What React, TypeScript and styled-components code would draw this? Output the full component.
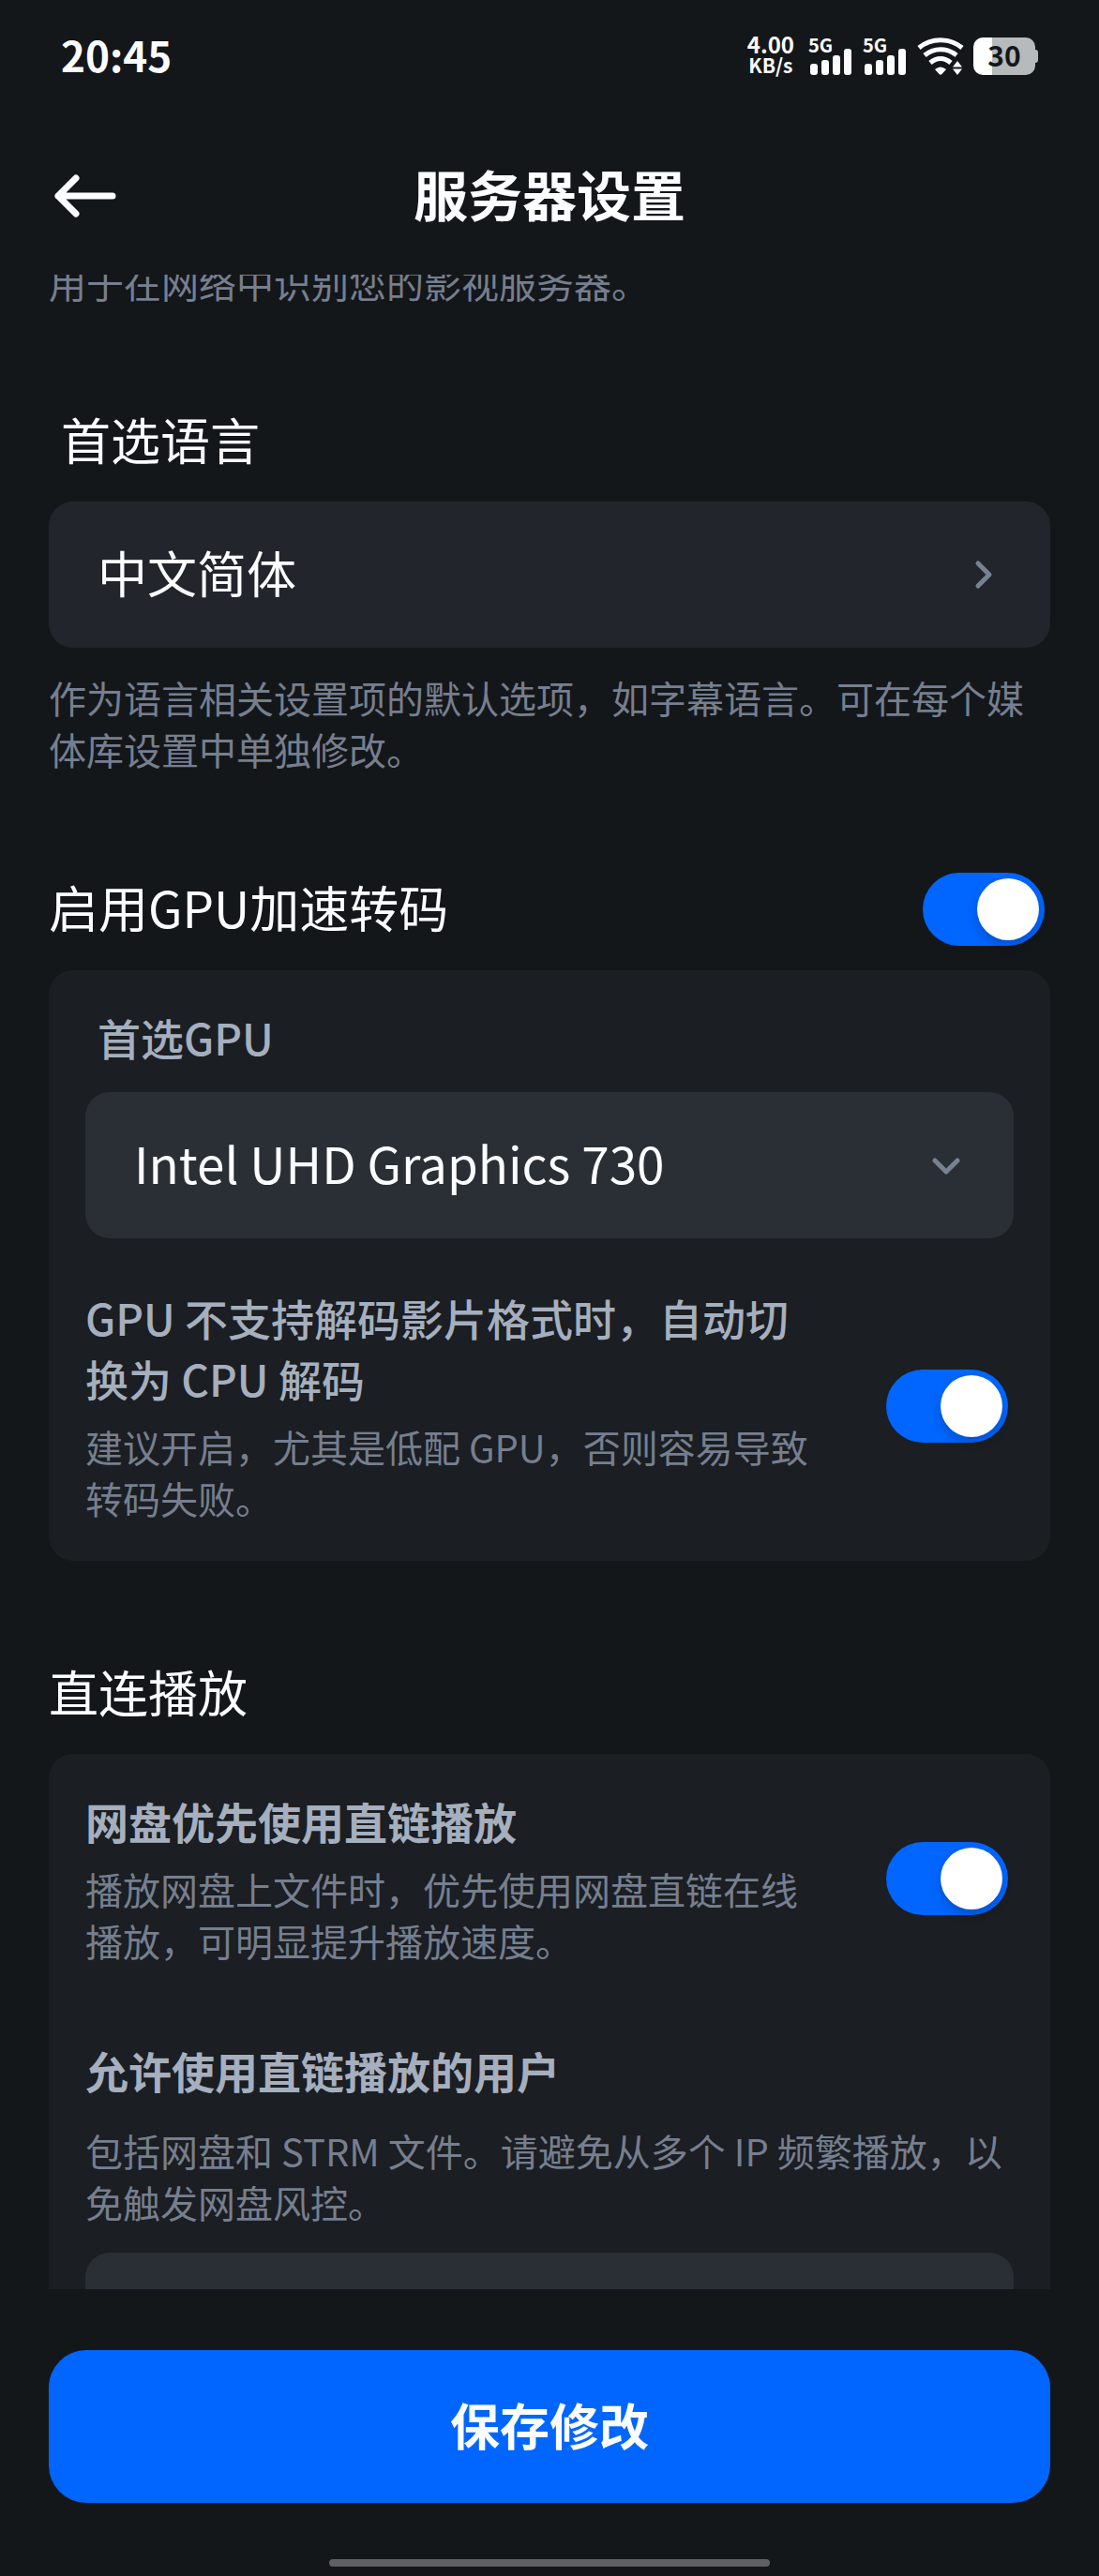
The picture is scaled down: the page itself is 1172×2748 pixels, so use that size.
import React, { useId, useLayoutEffect, useRef } from "react";
import styled, { createGlobalStyle, css } from "styled-components";

const color = {
  page: "#14171a",
  card: "#1b1e22",
  field: "#22252c",
  fieldRaised: "#2a2f36",
  text: "#fbfdfe",
  label: "#a5afbe",
  hint: "#767f8f",
  accent: "#0066ff",
};

const GlobalStyle = createGlobalStyle`
  *, *::before, *::after { box-sizing: border-box; }
  body { margin: 0; background: ${color.page}; }
  h1, h2, h3, p { margin: 0; font-weight: 400; }
  button, select, input { font: inherit; color: inherit; margin: 0; }
  body, button, select {
    font-family: "Noto Sans CJK SC", "Noto Sans", sans-serif;
  }
`;

const Page = styled.div`
  display: flex;
  flex-direction: column;
  height: 100vh;
  color: ${color.text};
`;

/* ---------- status bar ---------- */

const StatusBar = styled.div`
  display: flex;
  flex: none;
  align-items: center;
  justify-content: space-between;
  height: 120px;
  padding: 0 65px;
`;

const Clock = styled.time`
  padding-bottom: 4px;
  font-size: 44px;
  font-weight: 700;
  line-height: 46px;
`;

const StatusIcons = styled.div`
  display: flex;
  align-items: center;
  height: 40px;
`;

const NetSpeed = styled.div`
  display: flex;
  flex-direction: column;
  align-items: center;
  margin-right: 15px;
  padding-bottom: 4px;
  font-size: 21px;
  font-weight: 700;
  line-height: 23px;
`;

const NetValue = styled.span`
  font-size: 24px;
`;

const Signal = styled.div`
  display: grid;
  width: 48px;
  height: 40px;
  margin-right: 10px;

  > * {
    grid-area: 1 / 1;
  }
`;

const SignalTag = styled.span`
  align-self: start;
  font-size: 20px;
  font-weight: 700;
  line-height: 16px;
`;

const BatteryBox = styled.div`
  display: flex;
  align-items: center;
  margin-left: 10px;
`;

const BatteryBody = styled.div`
  width: 66px;
  height: 40px;
  border-radius: 10px;
  background: linear-gradient(to right, #ffffff 30%, #b6babb 30%);
  color: ${color.page};
  font-size: 30px;
  font-weight: 700;
  line-height: 36px;
  text-align: center;
`;

const BatteryTip = styled.div`
  width: 3px;
  height: 14px;
  border-radius: 0 3px 3px 0;
  background: #b6babb;
`;

function SignalIcon() {
  return (
    <Signal>
      <SignalTag>5G</SignalTag>
      <svg width="48" height="40" viewBox="0 0 48 40" fill="#fbfdfe" aria-hidden="true">
        <rect x="2" y="28" width="8" height="12" rx="3" />
        <rect x="14" y="24" width="8" height="16" rx="3" />
        <rect x="26" y="19" width="8" height="21" rx="3" />
        <rect x="38" y="12" width="8" height="28" rx="3" />
      </svg>
    </Signal>
  );
}

function WifiIcon() {
  return (
    <svg width="50" height="40" viewBox="0 0 50 40" aria-hidden="true">
      <g fill="none" stroke="#fbfdfe" strokeWidth="5">
        <path d="M2 11 C15 0 35 0 48 11" />
        <path d="M8 19 C18 10.500 32 10.500 42 19" />
        <path d="M14 27 C21 21 29 21 36 27" />
      </g>
      <g fill="#fbfdfe">
        <path d="M19 34 Q25 29 31 34 L26.500 39 Q25 40.500 23.500 39 Z" />
        <path d="M43 25 L48 31.500 H38 Z" />
        <path d="M38 33.500 H48 L43 40 Z" />
      </g>
    </svg>
  );
}

/* ---------- header ---------- */

const Header = styled.header`
  display: grid;
  flex: none;
  grid-template-columns: 72px 1fr 72px;
  align-items: center;
  height: 168px;
  margin-top: 5px;
  padding: 0 52px;
`;

const BackButton = styled.button`
  display: flex;
  align-items: center;
  justify-content: center;
  height: 72px;
  padding: 0;
  border: 0;
  background: none;
`;

const Title = styled.h1`
  padding-bottom: 6px;
  font-size: 58px;
  font-weight: 700;
  line-height: 78px;
  text-align: center;
`;

/* ---------- settings ---------- */

const Scroller = styled.main`
  flex: 1;
  min-height: 0;
  overflow-y: auto;
  scrollbar-width: none;
`;

const Sections = styled.div`
  display: flex;
  flex-direction: column;
  gap: 104px;
  padding: 0 52px 52px;
`;

const Section = styled.section`
  display: flex;
  flex-direction: column;
  gap: 26px;
`;

const heading = css`
  padding-bottom: 6px;
  font-size: 53px;
  line-height: 70px;
`;

const Heading = styled.h2<{ $inset?: boolean }>`
  ${heading}
  padding-left: ${(p) => (p.$inset ? 13 : 0)}px;
`;

const HeadingRow = styled.div`
  display: flex;
  align-items: center;
  justify-content: space-between;
  height: 78px;
  padding-right: 6px;
`;

const HeadingLabel = styled.label`
  ${heading}
`;

const Hint = styled.p`
  color: ${color.hint};
  font-size: 40px;
  line-height: 55px;
`;

const Card = styled.div<{ $roomy?: boolean }>`
  display: flex;
  flex-direction: column;
  gap: ${(p) => (p.$roomy ? 78 : 52)}px;
  padding: 39px;
  border-radius: 26px;
  background: ${color.card};
`;

const CardItem = styled.div`
  display: flex;
  flex-direction: column;
  gap: 26px;
`;

const CardLabel = styled.label<{ $inset?: boolean; $strong?: boolean }>`
  padding-left: ${(p) => (p.$inset ? 13 : 0)}px;
  color: ${color.label};
  font-size: 46px;
  font-weight: ${(p) => (p.$strong ? 700 : 500)};
  line-height: 65px;
`;

const ToggleRow = styled.div`
  display: flex;
  align-items: center;
  justify-content: space-between;
  gap: 72px;
  padding-right: 6px;
`;

const ToggleText = styled.div`
  display: flex;
  flex: 1;
  flex-direction: column;
  gap: 13px;
`;

const Switch = styled.input.attrs({ type: "checkbox", role: "switch" })`
  display: flex;
  flex: none;
  align-items: center;
  width: 130px;
  height: 78px;
  padding: 6px;
  border-radius: 39px;
  appearance: none;
  background: #3a4049;
  cursor: pointer;

  &::before {
    content: "";
    width: 66px;
    height: 66px;
    border-radius: 50%;
    background: #ffffff;
    box-shadow: 0 6px 12px rgba(0, 0, 0, 0.2);
  }

  &:checked {
    justify-content: flex-end;
    background: ${color.accent};
  }
`;

const fieldBox = css<{ $raised?: boolean }>`
  width: 100%;
  height: 156px;
  border: 0;
  border-radius: 26px;
  background: ${(p) => (p.$raised ? color.fieldRaised : color.field)};
  font-size: 53px;
  line-height: 70px;
  text-align: left;
`;

const FieldButton = styled.button<{ $raised?: boolean }>`
  ${fieldBox}
  display: flex;
  align-items: center;
  justify-content: space-between;
  padding: 0 52px;
`;

const FieldText = styled.span`
  padding-bottom: 6px;
`;

const SelectBox = styled.div`
  display: grid;
  align-items: center;

  > * {
    grid-area: 1 / 1;
  }

  > svg {
    justify-self: end;
    margin-right: 52px;
    pointer-events: none;
  }
`;

const FieldSelect = styled.select<{ $raised?: boolean }>`
  ${fieldBox}
  padding: 0 104px 6px 52px;
  appearance: none;
`;

function Chevron({ down }: { down?: boolean }) {
  return (
    <svg
      width="40"
      height="40"
      viewBox="0 0 40 40"
      fill="none"
      stroke="#768292"
      strokeWidth="5"
      strokeLinecap="round"
      strokeLinejoin="round"
      aria-hidden="true"
    >
      <path d={down ? "M8 15 L20 27 L32 15" : "M15 8 L27 20 L15 32"} />
    </svg>
  );
}

interface ToggleProps {
  title: string;
  hint: string;
  strong?: boolean;
}

function Toggle({ title, hint, strong }: ToggleProps) {
  const id = useId();
  return (
    <ToggleRow>
      <ToggleText>
        <CardLabel htmlFor={id} $strong={strong}>
          {title}
        </CardLabel>
        <Hint id={`${id}-hint`}>{hint}</Hint>
      </ToggleText>
      <Switch id={id} aria-describedby={`${id}-hint`} defaultChecked />
    </ToggleRow>
  );
}

/* ---------- footer ---------- */

const Footer = styled.footer`
  display: flex;
  flex: none;
  flex-direction: column;
  align-items: center;
  gap: 60px;
  padding: 65px 52px 10px;
`;

const SaveButton = styled.button`
  width: 100%;
  height: 163px;
  padding: 0 0 6px;
  border: 0;
  border-radius: 40px;
  background: ${color.accent};
  font-size: 53px;
  font-weight: 700;
  line-height: 70px;
`;

const HomeBar = styled.div`
  width: 44%;
  height: 8px;
  border-radius: 4px;
  background: #5e6062;
`;

export default function App() {
  const scroller = useRef<HTMLElement>(null);

  useLayoutEffect(() => {
    if (scroller.current) scroller.current.scrollTop = 19;
  }, []);

  return (
    <Page lang="zh-CN">
      <GlobalStyle />
      <StatusBar>
        <Clock>20:45</Clock>
        <StatusIcons>
          <NetSpeed>
            <NetValue>4.00</NetValue>
            <span>KB/s</span>
          </NetSpeed>
          <SignalIcon />
          <SignalIcon />
          <WifiIcon />
          <BatteryBox>
            <BatteryBody>30</BatteryBody>
            <BatteryTip />
          </BatteryBox>
        </StatusIcons>
      </StatusBar>

      <Header>
        <BackButton aria-label="返回">
          <svg
            width="72"
            height="52"
            viewBox="0 0 72 52"
            fill="none"
            stroke="#fbfdfe"
            strokeWidth="7"
            strokeLinecap="round"
            strokeLinejoin="round"
            aria-hidden="true"
          >
            <path d="M29 7 L10 26 L29 45 M10 26 H68" />
          </svg>
        </BackButton>
        <Title>服务器设置</Title>
      </Header>

      <Scroller ref={scroller}>
        <Sections>
          <Hint>用于在网络中识别您的影视服务器。</Hint>

          <Section>
            <Heading $inset id="language-label">
              首选语言
            </Heading>
            <FieldButton aria-describedby="language-label">
              <FieldText>中文简体</FieldText>
              <Chevron />
            </FieldButton>
            <Hint>作为语言相关设置项的默认选项，如字幕语言。可在每个媒体库设置中单独修改。</Hint>
          </Section>

          <Section>
            <HeadingRow>
              <HeadingLabel htmlFor="gpu-enabled">启用GPU加速转码</HeadingLabel>
              <Switch id="gpu-enabled" defaultChecked />
            </HeadingRow>
            <Card>
              <CardItem>
                <CardLabel $inset htmlFor="gpu-device">
                  首选GPU
                </CardLabel>
                <SelectBox>
                  <FieldSelect $raised id="gpu-device">
                    <option>Intel UHD Graphics 730</option>
                  </FieldSelect>
                  <Chevron down />
                </SelectBox>
              </CardItem>
              <Toggle
                title="GPU 不支持解码影片格式时，自动切换为 CPU 解码"
                hint="建议开启，尤其是低配 GPU，否则容易导致转码失败。"
              />
            </Card>
          </Section>

          <Section>
            <Heading>直连播放</Heading>
            <Card $roomy>
              <Toggle
                strong
                title="网盘优先使用直链播放"
                hint="播放网盘上文件时，优先使用网盘直链在线播放，可明显提升播放速度。"
              />
              <CardItem>
                <CardLabel $strong htmlFor="direct-users">
                  允许使用直链播放的用户
                </CardLabel>
                <Hint>包括网盘和 STRM 文件。请避免从多个 IP 频繁播放，以免触发网盘风控。</Hint>
                <FieldButton $raised id="direct-users" />
              </CardItem>
            </Card>
          </Section>
        </Sections>
      </Scroller>

      <Footer>
        <SaveButton>保存修改</SaveButton>
        <HomeBar />
      </Footer>
    </Page>
  );
}
